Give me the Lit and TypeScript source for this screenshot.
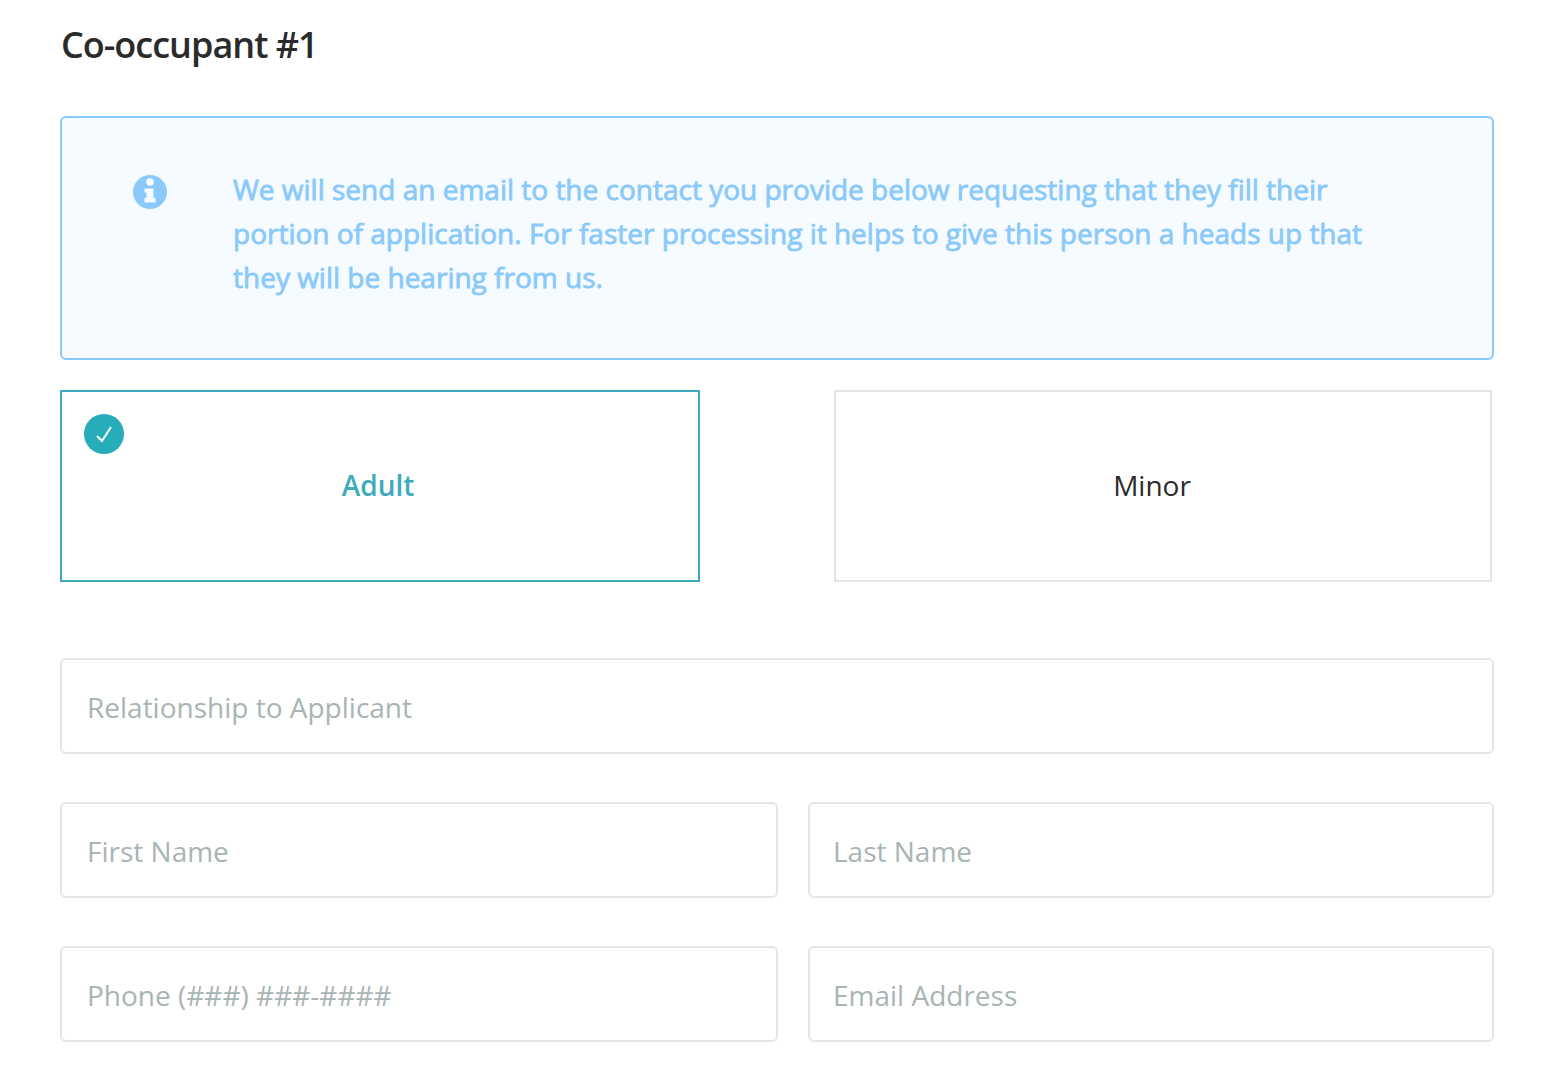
import { LitElement, html, css } from 'lit';
import { customElement } from 'lit/decorators.js';

@customElement('app-root')
class AppRoot extends LitElement {
  static styles = css`
    :host {
      display: block;
      font-family: 'Open Sans', sans-serif;
      background: #fff;
      min-height: 1086px;
    }

    .page {
      padding: 0 62px 0 60px;
      box-sizing: border-box;
      width: 1556px;
    }

    h1 {
      margin: 0;
      padding: 21px 0 0 1px;
      height: 116px;
      box-sizing: border-box;
      font-size: 36px;
      line-height: 48px;
      font-weight: 600;
      letter-spacing: -1px;
      color: #2b2b2b;
    }

    .notice {
      display: flex;
      box-sizing: border-box;
      height: 244px;
      padding: 49px 110px 0 71px;
      background: #f6fbff;
      border: 2px solid #8ac9fb;
      border-radius: 6px;
      color: #8ac9fb;
      font-size: 28px;
      font-weight: 400;
      -webkit-text-stroke: 0.8px #8ac9fb;
      line-height: 44px;
    }

    .notice svg {
      flex: none;
      width: 34px;
      height: 34px;
      margin: 8px 66px 0 0;
    }

    .choices {
      display: flex;
      justify-content: space-between;
      margin: 30px 2px 76px 0;
    }

    .choice {
      position: relative;
      display: flex;
      align-items: center;
      justify-content: center;
      box-sizing: border-box;
      height: 192px;
      width: 658px;
      padding: 0 22px 2px 0;
      border: 2px solid #e1e6e8;
      font-size: 28px;
      color: #2b2b2b;
    }

    .choice.selected {
      width: 640px;
      padding-right: 4px;
      border-color: #3eabbd;
      color: #3eabbd;
      font-weight: 600;
    }

    .check {
      position: absolute;
      left: 22px;
      top: 22px;
      width: 40px;
      height: 40px;
    }

    .fields {
      display: grid;
      grid-template-columns: 718px 686px;
      column-gap: 30px;
      row-gap: 48px;
    }

    .field {
      box-sizing: border-box;
      height: 96px;
      padding: 2px 25px 0;
      display: flex;
      align-items: center;
      border: 2px solid #e1e6e8;
      border-radius: 6px;
      font-size: 28px;
      color: #a9b4b5;
    }

    .field.right {
      padding-left: 23px;
    }

    .wide {
      grid-column: 1 / -1;
    }
  `;

  render() {
    return html`
      <div class="page">
        <h1>Co-occupant #1</h1>
        <div class="notice">
          <svg viewBox="0 0 34 34">
            <circle cx="17" cy="17" r="17" fill="#8ac9fb"></circle>
            <circle cx="17" cy="7" r="3.8" fill="#f6fbff"></circle>
            <path d="M11.5 13.5h9V23h2v4.5h-11V23h2v-5.5h-2z" fill="#f6fbff"></path>
          </svg>
          <div>
            We will send an email to the contact you provide below requesting that they fill their
            portion of application. For faster processing it helps to give this person a heads up that
            they will be hearing from us.
          </div>
        </div>
        <div class="choices">
          <div class="choice selected">
            <svg class="check" viewBox="0 0 40 40">
              <circle cx="20" cy="20" r="20" fill="#27adb9"></circle>
              <path d="M13 22l5 5L27 13" fill="none" stroke="#fff" stroke-width="2"></path>
            </svg>
            Adult
          </div>
          <div class="choice">Minor</div>
        </div>
        <div class="fields">
          <div class="field wide">Relationship to Applicant</div>
          <div class="field">First Name</div>
          <div class="field right">Last Name</div>
          <div class="field">Phone (###) ###-####</div>
          <div class="field right">Email Address</div>
        </div>
      </div>
    `;
  }
}

export default AppRoot;
